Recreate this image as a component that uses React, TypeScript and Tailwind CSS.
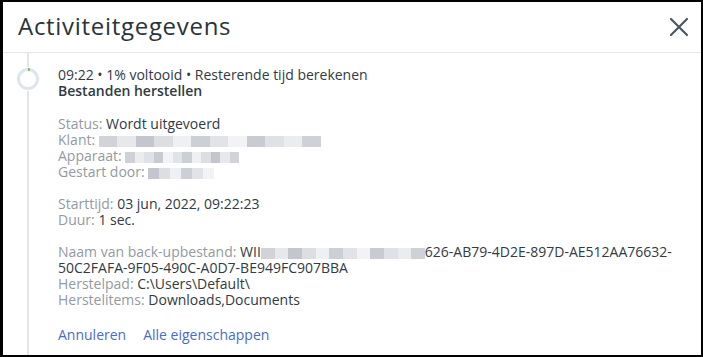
import React from "react";

const Blur = ({ w, shades }: { w: number; shades: string[] }) => (
  <span className="inline-flex h-[11px] align-middle overflow-hidden blur-[0.7px] opacity-85" style={{ width: w }}>
    {shades.map((c, i) => (
      <span key={i} className="h-full flex-1" style={{ background: c }} />
    ))}
  </span>
);

const g = ["#c9ccd3", "#e2e4e8", "#b9bdc6", "#d6d9de", "#eceef1", "#c3c7cf", "#dcdfe4", "#f1f2f4", "#bfc3cb", "#d9dce1", "#e8e9ec", "#c6c9d0"];

const Row = ({ label, children }: { label: string; children: React.ReactNode }) => (
  <div className="leading-[16px]">
    <span className="text-[#939aa2]">{label}: </span>
    <span className="text-[#323a43]">{children}</span>
  </div>
);

export default function App() {
  return (
    <div
      className="w-[703px] h-[357px] bg-white border-black border-l-[3px] border-t-2 border-r-2 border-b-2 flex flex-col overflow-hidden"
      style={{ fontFamily: '"Open Sans", "Noto Sans", sans-serif' }}
    >
      <div className="h-[51px] shrink-0 border-b border-[#e3e8ef] flex items-center justify-between pl-[15px] pr-[10px]">
        <div className="text-[24px] text-[#2b333b] leading-none tracking-[0.7px] mt-[-2px]">Activiteitgegevens</div>
        <svg width="22" height="22" viewBox="0 0 22 22" className="mr-[1px]">
          <path d="M3 3 L19 19 M19 3 L3 19" stroke="#4b5763" strokeWidth="2.2" strokeLinecap="round" />
        </svg>
      </div>
      <div className="flex flex-1 min-h-0">
        <div className="w-[55px] shrink-0 flex flex-col items-center pl-[1px]">
          <div className="w-[2px] h-[14px] bg-[#e2e5e9] ml-[-7px]" />
          <svg width="24" height="24" viewBox="0 0 24 24" className="ml-[-7px] shrink-0">
            <circle cx="12" cy="12" r="9.5" fill="white" stroke="#dfe5ec" strokeWidth="3" />
            <path d="M12 2.5 A9.5 9.5 0 0 1 13.8 2.67" fill="none" stroke="#7cc043" strokeWidth="3" />
          </svg>
          <div className="w-[2px] flex-1 bg-[#e2e5e9] ml-[-7px]" />
        </div>
        <div className="pt-[14px] text-[14px] text-[#323a43]">
          <div className="leading-[16px]">09:22 • 1% voltooid • Resterende tijd berekenen</div>
          <div className="leading-[16px] font-semibold">Bestanden herstellen</div>
          <div className="mt-[17px]">
            <Row label="Status">Wordt uitgevoerd</Row>
            <Row label="Klant"><Blur w={222} shades={g} /></Row>
            <Row label="Apparaat"><Blur w={114} shades={g.slice().reverse()} /></Row>
            <Row label="Gestart door"><Blur w={66} shades={g.slice(2, 8)} /></Row>
          </div>
          <div className="mt-[16px]">
            <Row label="Starttijd">03 jun, 2022, 09:22:23</Row>
            <Row label="Duur">1 sec.</Row>
          </div>
          <div className="mt-[16px]">
            <div className="leading-[16px] w-[625px]">
              <span className="text-[#939aa2]">Naam van back-upbestand: </span>
              <span className="text-[#323a43]">
                WII<Blur w={164} shades={g} />626-AB79-4D2E-897D-AE512AA76632-50C2FAFA-9F05-490C-A0D7-BE949FC907BBA
              </span>
            </div>
            <Row label="Herstelpad">C:\Users\Default\</Row>
            <Row label="Herstelitems">Downloads,Documents</Row>
          </div>
          <div className="mt-[19px] flex gap-[17px] text-[#4a6cc8] leading-[16px]">
            <span>Annuleren</span>
            <span>Alle eigenschappen</span>
          </div>
        </div>
      </div>
    </div>
  );
}
